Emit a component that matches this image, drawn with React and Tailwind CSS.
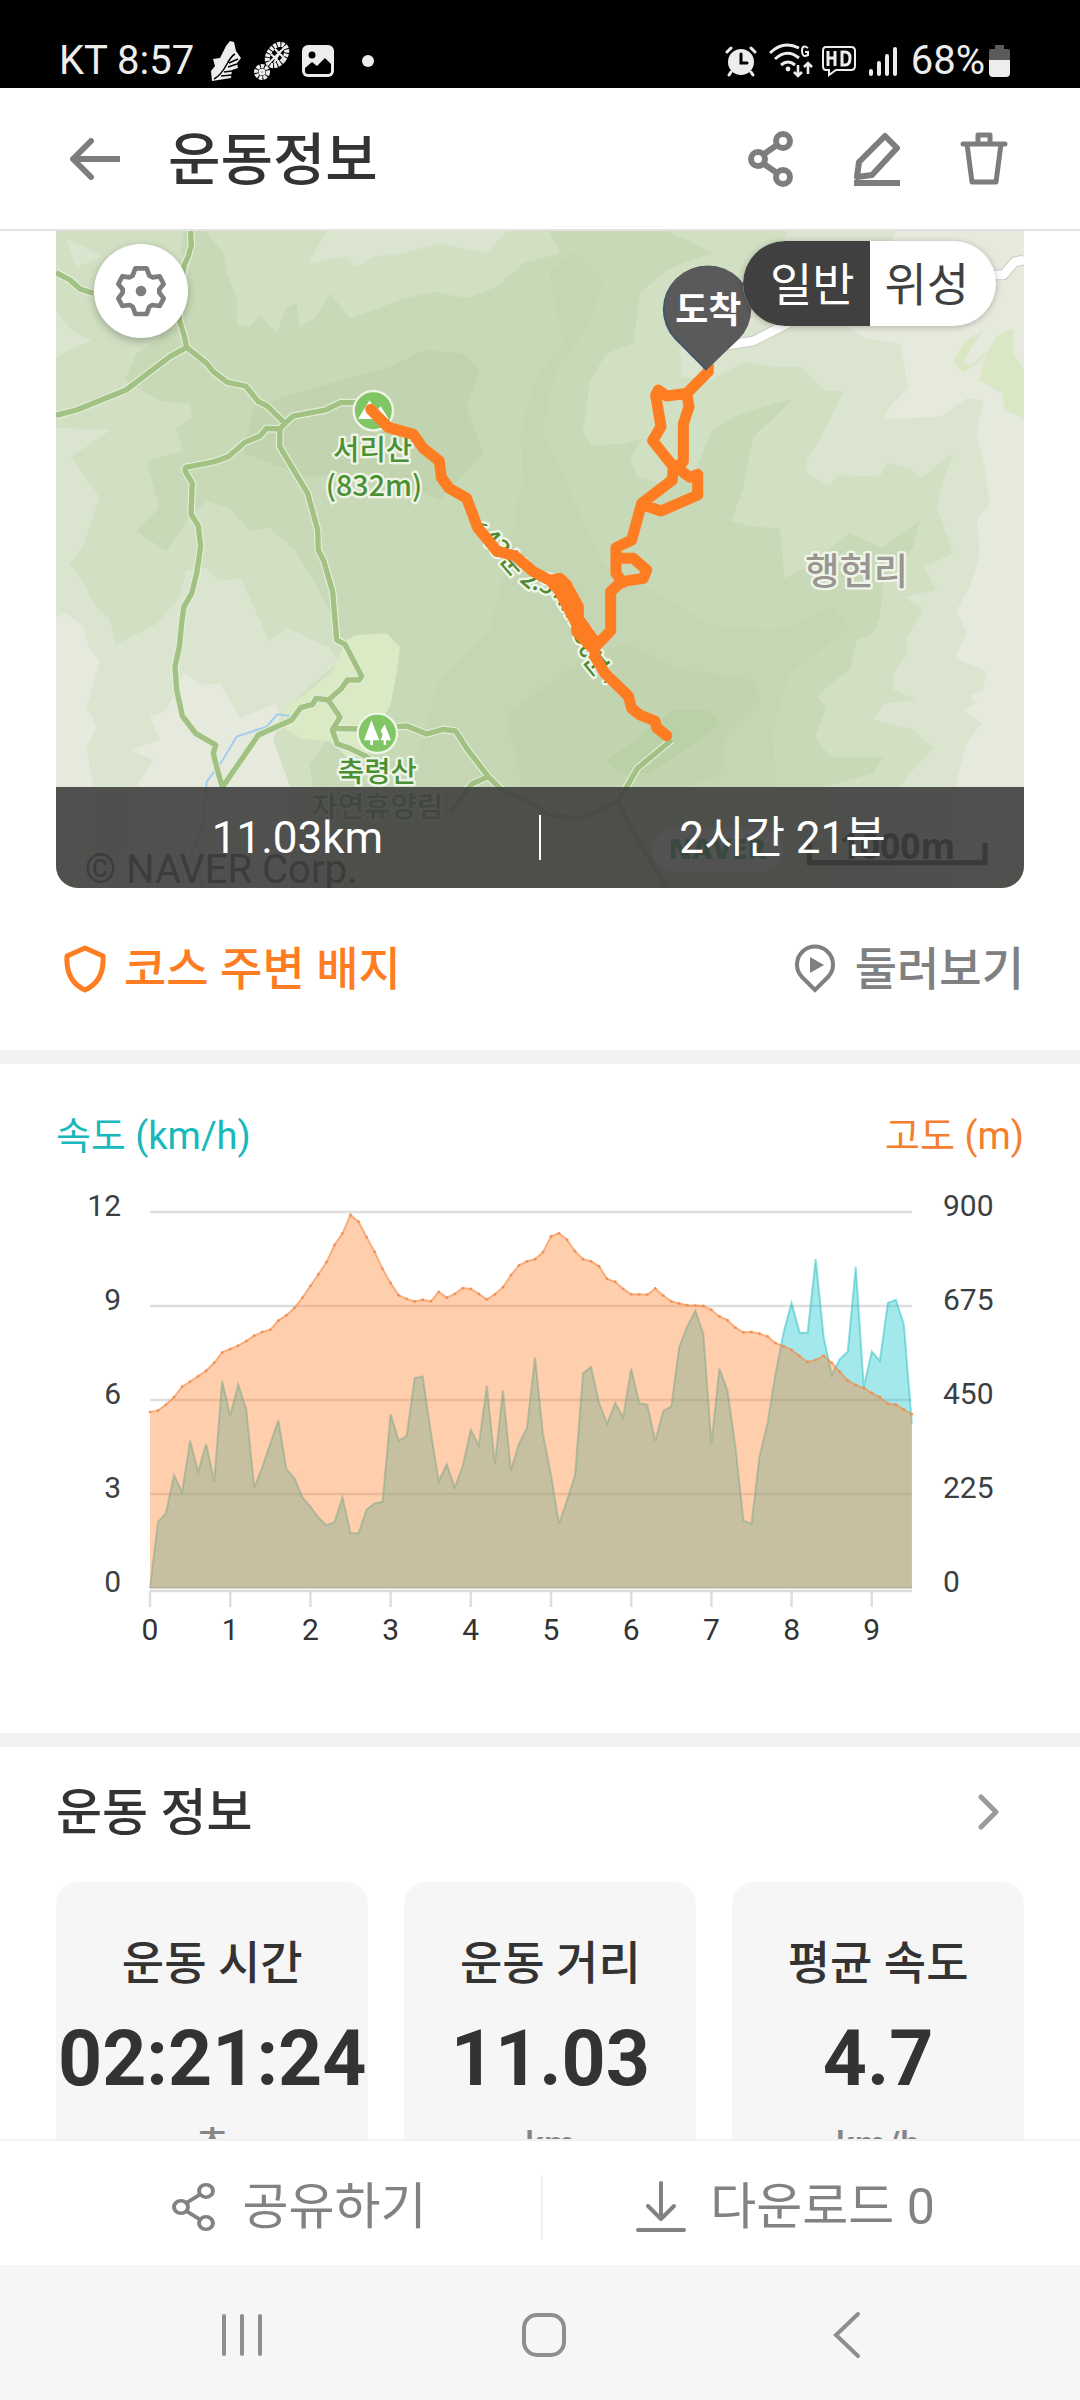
// src/pages/WorkoutDetailPage.jsx
import { useState } from 'react';

const ALTITUDE = [
  421, 425, 439, 457, 482, 494, 507, 520, 539, 564, 572, 580, 591, 604, 613, 618, 640, 653, 670, 695,
  723, 751, 780, 821, 849, 893, 877, 840, 805, 764, 730, 701, 692, 686, 690, 686, 709, 695, 704, 718,
  716, 704, 691, 703, 720, 749, 772, 782, 787, 804, 842, 849, 834, 806, 787, 782, 770, 740, 733, 716,
  703, 703, 702, 717, 700, 686, 681, 677, 676, 675, 666, 650, 641, 623, 612, 613, 609, 602, 586, 579,
  570, 555, 541, 546, 556, 539, 518, 497, 486, 479, 467, 457, 441, 439, 427, 416,
];

const SPEED = [
  0, 2.1, 2.4, 3.6, 3.05, 4.7, 3.7, 4.6, 3.4, 6.6, 5.5, 6.5, 5.7, 3.2, 3.85, 4.6, 5.35, 3.8, 3.5, 2.9,
  2.6, 2.25, 2, 2.1, 2.9, 1.75, 1.75, 2.5, 2.7, 2.75, 5.55, 4.7, 4.85, 6.7, 6.75, 5, 3.4, 3.95, 3.2, 3.9,
  5.05, 4.55, 6.45, 3.95, 6.3, 3.75, 4.6, 5.1, 7.35, 4.9, 3.6, 2.05, 2.8, 3.6, 6.85, 7.05, 5.9, 5.25, 5.9, 5.45,
  7, 5.9, 5.85, 4.7, 5.65, 5.8, 7.7, 8.35, 8.85, 8.1, 4.6, 7, 6.3, 4.5, 2.15, 2.05, 4.2, 5.25, 6.85, 8.15,
  9.1, 8.15, 8.15, 10.5, 8, 6.8, 7.3, 7.55, 10.25, 6.4, 7.55, 7.25, 9.1, 9.2, 8.4, 5.25,
];

const STATS = [
  { label: '운동 시간', value: '02:21:24', unit: '초' },
  { label: '운동 거리', value: '11.03', unit: 'km' },
  { label: '평균 속도', value: '4.7', unit: 'km/h' },
];

function ShareIcon({ className, strokeWidth = 6 }) {
  return (
    <svg className={className} viewBox="0 0 46 56" preserveAspectRatio="none" fill="none" stroke="currentColor" strokeWidth={strokeWidth}>
      <circle cx="10" cy="28" r="7" />
      <circle cx="35" cy="10" r="7" />
      <circle cx="35" cy="46" r="7" />
      <path d="M16 23 L29 14 M16 33 L29 42" />
    </svg>
  );
}

function StatusBar() {
  return (
    <div className="flex h-[88px] shrink-0 items-end justify-between bg-black pr-[70px] pb-1 pl-[59px] text-[40px] leading-[46px] text-[#ededed]">
      <div className="flex items-center">
        <span>KT 8:57</span>
        {/* boot */}
        <svg className="ml-4 h-10 w-8" viewBox="0 0 32 40">
          <path d="M16 5 L20 0 L24 1 L26 10 L31 17 L27 22 L28 27 L22 29 L21 37 L2 40 L1 30 L5 25 L3 18 L10 17 Z" fill="currentColor" />
          <path d="M25 13 C17 17 16 32 4 38 M28 18 L19 22 M27 23 L18 26 M22 30 L14 31 M22 34 L11 35" fill="none" stroke="#000" strokeWidth="1.5" />
        </svg>
        {/* sole print */}
        <svg className="ml-3 h-10 w-9" viewBox="0 0 36 40" fill="none" stroke="currentColor">
          <ellipse cx="23" cy="14" rx="8" ry="12" transform="rotate(38 23 14)" strokeWidth="5" strokeDasharray="3 1" />
          <path d="M16 21 L31 6 M17 13 L25 21 M21 8 L30 17 M25 13 L20 22" strokeWidth="2" />
          <circle cx="8" cy="31" r="6" strokeWidth="4" strokeDasharray="3.4 1" />
          <circle cx="8" cy="31" r="2" strokeWidth="3" />
        </svg>
        {/* gallery */}
        <svg className="ml-3 h-8 w-8" viewBox="0 0 32 32">
          <rect width="32" height="32" rx="6" fill="currentColor" />
          <circle cx="10" cy="10" r="3.5" fill="#000" />
          <path d="M3 23 L10 17 L15 21 L23 13 L29 19 V26 Q29 29 26 29 H6 Q3 29 3 26 Z" fill="#000" />
        </svg>
        <span className="ml-7 size-3 rounded-full bg-[#ededed]" />
      </div>
      <div className="flex items-center">
        {/* alarm */}
        <svg className="h-8 w-8" viewBox="0 0 32 32" fill="none" stroke="currentColor" strokeWidth="3" strokeLinecap="round">
          <circle cx="16" cy="17" r="13" fill="currentColor" stroke="none" />
          <path d="M2 7 L6 3 M30 7 L26 3 M6 27 L4 30 M26 27 L28 30" />
          <path d="M16 9 V18 H22" stroke="#000" />
        </svg>
        {/* wifi */}
        <svg className="ml-3 h-9 w-11" viewBox="0 0 44 36" fill="none" stroke="currentColor" strokeWidth="3">
          <path d="M1 10 Q14 -3 30 5 M6 16 Q18 5 30 15 M12 22 Q19 16 26 22" />
          <circle cx="19" cy="26" r="2.4" fill="currentColor" stroke="none" />
          <path d="M39 5 Q33 1 33 8 Q33 15 39 12 V9 H36" strokeWidth="2" />
          <path d="M29 22 V33 M25 29 L29 33 L33 29 M39 31 V20 M35 24 L39 20 L43 24" strokeWidth="2.6" />
        </svg>
        {/* HD call */}
        <svg className="ml-2 h-8 w-9" viewBox="0 0 36 32" fill="none" stroke="currentColor">
          <path d="M5 2 H30 Q34 2 34 6 V21 Q34 25 30 25 H15 L8 30 V25 H5 Q2 25 2 21 V6 Q2 2 5 2 Z" strokeWidth="2" />
          <path d="M7 6 V21 M14 6 V21 M7 13 H14 M21 7 V20 H24 Q29 20 29 13 Q29 7 24 7 Z" strokeWidth="3" />
        </svg>
        {/* signal */}
        <svg className="ml-3 h-8 w-7" viewBox="0 0 28 32" stroke="currentColor" strokeWidth="4" strokeLinecap="round">
          <path d="M2 26 V29 M10 18 V29 M18 11 V29 M26 4 V29" />
        </svg>
        <span className="ml-[14px]">68%</span>
        {/* battery */}
        <svg className="ml-1 h-8 w-[21px]" viewBox="0 0 21 32">
          <path d="M6 0 H15 V4 H19 Q21 4 21 7 V15 H0 V7 Q0 4 2 4 H6 Z" fill="#5a5a5a" />
          <path d="M0 15 H21 V28 Q21 32 17 32 H4 Q0 32 0 28 Z" fill="currentColor" />
        </svg>
      </div>
    </div>
  );
}

function Header() {
  return (
    <header className="flex h-[143px] shrink-0 items-center border-b-2 border-[#e2e2e2] pr-[72px] pl-[70px] text-[#7d7d7d]">
      <button type="button" aria-label="뒤로">
        <svg className="h-[42px] w-[50px]" viewBox="0 0 50 42" fill="none" stroke="currentColor" strokeWidth="6" strokeLinejoin="round">
          <path d="M50 21 H4" />
          <path d="M21 3 L3 21 L21 39" strokeLinecap="round" />
        </svg>
      </button>
      <h1 className="ml-12 pt-1 text-[57px] leading-[80px] font-medium text-[#333]">운동정보</h1>
      <div className="ml-auto flex items-center gap-[60px]">
        <button type="button" aria-label="공유">
          <ShareIcon className="h-14 w-[46px]" />
        </button>
        <button type="button" aria-label="편집">
          <svg className="h-14 w-[46px]" viewBox="0 0 46 56" fill="none" stroke="currentColor" strokeWidth="6">
            <path d="M31 5 L43 17 L18 44 L3 46 L5 31 Z" strokeLinejoin="round" />
            <path d="M0 52 H46" />
          </svg>
        </button>
        <button type="button" aria-label="삭제">
          <svg className="h-14 w-12" viewBox="0 0 48 56" fill="none" stroke="currentColor" strokeWidth="5" strokeLinejoin="round">
            <path d="M3 13 H45" strokeLinecap="round" />
            <path d="M18 13 V4 H30 V13 M7 13 L12 51 H36 L41 13" />
          </svg>
        </button>
      </div>
    </header>
  );
}

const TRAILS = [
  'M404 0 L406 42 L397 75 L384 105 L370 190 L370 267 L384 312 L392 349',
  'M0 125 L42 147 L72 174 L112 187',
  'M0 553 L62 537 L210 477 L342 377 L392 349 L452 397 L472 422 L514 454 L569 465 L607 512 L634 525 L687 577',
  'M687 577 L712 555 L809 537 L854 515 L900 515',
  'M687 577 L672 594 L632 592 L612 615 L565 635 L517 677 L472 693 L389 709 L387 719 L409 757 L405 849 L427 885 L434 947 L422 1027 L407 1087 L384 1127 L378 1167 L370 1247 L357 1307 L362 1377 L379 1455 L419 1507 L479 1542 L472 1567 L487 1627 L499 1669',
  'M672 594 L671 647 L755 787 L785 897 L787 957 L804 992 L830 1082 L842 1227 L867 1240 L917 1335 L909 1347 L874 1347 L857 1372 L817 1407 L780 1402 L770 1420 L734 1430 L707 1467 L607 1512 L499 1669',
  'M817 1407 L852 1459 L829 1497 L844 1539 L882 1552 L932 1577 L960 1597',
  'M832 1492 L910 1494 M1022 1487 L1052 1485 L1112 1509 L1162 1495 L1199 1500 L1232 1552 L1297 1637 L1347 1687 L1402 1702 L1482 1752 L1572 1762 L1687 1712',
  'M1297 1637 L1247 1659 L1182 1747',
  'M1847 1527 L1744 1612 L1687 1712 L1722 1787 L1832 1970',
];

const ROUTES = [
  'M944 535 L997 589 L1072 610 L1102 652 L1150 690 L1156 740 L1180 772 L1232 802 L1265 890 L1297 928 L1322 960 L1377 975 L1432 1022 L1482 1048 L1512 1042 L1532 1062 L1567 1127 L1567 1162 L1617 1232 L1617 1277 L1647 1327 L1717 1395 L1727 1432 L1752 1452 L1797 1470 L1802 1490 L1832 1514',
  'M1482 1048 L1510 1080 L1562 1180 L1562 1202 L1612 1254 L1664 1199 L1664 1082 L1697 1052 L1762 1042 L1772 1017 L1732 982 L1680 982',
  'M1700 1055 L1680 1027 L1680 950 L1727 927 L1757 817 L1849 747 L1852 707 L1790 629 L1815 587 L1799 492 L1807 477 L1832 495 L1892 487 L1957 422 L1957 404',
  'M1892 487 L1899 527 L1882 579 L1882 692 L1860 708 L1902 739 L1925 730 L1925 792 L1815 840 L1762 822',
];

// Drawn on a 2904 x 1971 canvas (three units per map pixel)
function TrailMap() {
  const label = { paintOrder: 'stroke', strokeLinejoin: 'round' };
  return (
    <svg className="block w-full" viewBox="0 0 2904 1971" role="img" aria-label="서리산 축령산 운동 경로 지도">
      {/* Terrain */}
      <rect width="2904" height="1971" fill="#c7d9b6" />
      <path fill="#d1dfc2" d="M0 0 H384 L372 60 L400 100 L390 230 L300 330 L240 370 L207 447 L310 510 L402 520 L410 560 L360 590 L380 660 L272 690 L310 830 L240 900 L330 960 L400 860 L450 810 L520 830 L580 900 L640 890 L720 960 L790 1080 L850 1200 L880 1300 L900 1400 L760 1600 L820 1971 H0 Z" />
      <path fill="#d1dfc2" d="M450 0 L462 17 L502 67 L512 127 L542 197 L542 282 L582 287 L612 252 L662 307 L692 227 L722 217 L732 287 L782 257 L822 187 L882 262 L952 237 L1032 207 L1132 182 L1232 202 L1322 167 L1402 97 L1512 67 L1480 0 Z" />
      <path fill="#dbe4cf" d="M812 0 L757 97 L872 77 L902 107 L952 77 L1042 67 L1152 37 L1292 67 L1352 0 Z M30 20 L140 75 L60 110 Z" />
      <path fill="#c4d6b3" d="M1400 740 L1395 600 L1440 440 L1520 340 L1480 120 L1560 60 L1640 150 L1600 280 L1500 420 L1460 600 L1560 820 L1640 1000 L1760 1060 L1960 1180 L2160 1200 L2330 1130 L2380 1190 L2200 1330 L2150 1500 L2160 1668 H1050 L1150 1350 L1300 1200 L1350 1000 Z" />
      <path fill="#c2d4af" d="M562 667 L592 527 L752 477 L1002 407 L1102 357 L1222 367 L1272 417 L1232 527 L1282 667 L1152 807 L952 727 L752 737 Z" />
      <path fill="#c2d4af" d="M1350 1450 L1560 1300 L1702 1237 L1850 1310 L2092 1347 L2112 1407 L2012 1507 L1992 1627 L1900 1668 H1400 Z" />
      <path fill="#bad0a6" d="M1652 1587 L1712 1547 L1852 1437 L1952 1437 L1997 1477 L1902 1547 L1782 1627 L1692 1627 Z" />
      <path fill="#d1dfc2" d="M1832 0 L1892 27 L1967 67 L1880 97 L1832 117 L1752 187 L1732 337 L1652 367 L1602 447 L1580 607 L1607 642 L1702 640 L1762 620 L1722 680 L1742 737 L1830 760 L1920 720 L1965 600 L2050 550 L2215 500 L2090 620 L2060 780 L2025 870 L2092 887 L2172 892 L2185 1042 L2250 1010 L2380 907 L2480 950 L2590 870 L2570 950 L2480 1060 L2472 1157 L2452 1207 L2402 1227 L2382 1317 L2312 1367 L2282 1397 L2312 1427 L2277 1517 L2322 1577 L2482 1577 L2452 1627 L2302 1668 V1971 H2904 V0 Z" />
      <path fill="#dbe4cf" d="M2192 0 L2172 80 L1872 297 L1877 437 L1962 447 L2072 392 L2152 407 L2232 407 L2302 477 L2362 482 L2312 587 L2252 687 L2252 727 L2322 767 L2342 732 L2472 737 L2492 697 L2562 712 L2592 742 L2692 667 L2662 747 L2642 827 L2692 967 L2602 1007 L2642 1077 L2542 1097 L2602 1137 L2552 1217 L2552 1267 L2512 1327 L2512 1377 L2582 1407 L2482 1417 L2452 1467 L2572 1497 L2632 1552 L2562 1627 L2532 1668 V1971 H2904 V0 Z" />
      <path fill="#e6eadd" d="M2522 0 L2372 287 L2432 322 L2532 337 L2557 472 L2502 527 L2482 565 L2652 557 L2732 502 L2782 507 L2762 607 L2782 687 L2802 817 L2762 867 L2772 967 L2742 1067 L2702 1137 L2732 1207 L2697 1282 L2792 1322 L2782 1377 L2742 1392 L2762 1417 L2722 1437 L2777 1477 L2732 1537 L2702 1647 V1971 H2904 V0 Z" />
      <path fill="#dbe4cf" d="M0 240 L50 300 L110 330 L30 360 L0 380 Z M0 590 L165 597 L45 677 L130 797 L80 950 L40 1000 L80 1050 L120 1130 L160 1160 L180 1240 L300 1180 L370 1100 L390 1020 L450 1010 L490 1050 L555 1040 L590 1120 L640 1230 L690 1190 L820 1250 L850 1290 L690 1430 L650 1530 L700 1660 V1971 H0 Z" />
      <path fill="#e6eadd" d="M0 1157 L32 1147 L82 1187 L102 1257 L132 1287 L92 1427 L122 1487 L92 1547 L112 1668 V1971 H0 Z M382 1327 L442 1362 L492 1357 L552 1462 L662 1417 L672 1450 L652 1527 L702 1668 V1971 H200 L242 1668 L292 1587 L222 1557 L312 1527 L282 1457 L332 1437 Z" />
      <path fill="#d9eac5" d="M902 1212 L992 1207 L1032 1247 L1022 1327 L1002 1427 L952 1507 L932 1577 L872 1577 L822 1532 L732 1522 L692 1497 L672 1437 L752 1387 L832 1317 L872 1227 Z" />
      <path fill="#d9e7c4" d="M2822 317 L2872 292 V367 L2904 417 V562 L2847 537 L2837 487 L2767 447 L2792 367 Z M2692 390 L2722 335 L2782 297 L2745 350 L2722 395 L2750 400 L2790 360 L2780 385 L2722 425 Z" />

      {/* Stream and road */}
      <path fill="none" stroke="#a3cdf0" strokeWidth="6" d="M702 1455 L664 1450 L632 1487 L542 1517 L497 1592 L452 1652 L442 1787 L407 1867 L442 1970" />
      <g fill="none" strokeLinejoin="round">
        <path stroke="#c9ccc6" strokeWidth="32" d="M2000 345 L2092 330 L2200 275 M2800 132 L2842 132 L2877 92 L2904 87" />
        <path stroke="#fff" strokeWidth="26" d="M2000 345 L2092 330 L2200 275 M2800 132 L2842 132 L2877 92 L2904 87" />
        <path stroke="#dfe2d8" strokeWidth="20" d="M2780 1971 V1840 L2870 1770 L2904 1730" />
      </g>

      <g fill="none" strokeLinejoin="round">
        <path stroke="#e4edd9" strokeWidth="23" d={TRAILS.join(' ')} />
        <path stroke="#a1c282" strokeWidth="16" d={TRAILS.join(' ')} />
      </g>

      {/* Map labels */}
      <g fontFamily="'Noto Sans CJK KR', sans-serif" fontSize="86" fontWeight="500" textAnchor="middle" fill="#4b9134" stroke="#f0f5ea" strokeWidth="14" style={label}>
        <text x="950" y="688">서리산</text>
        <text x="954" y="794">(832m)</text>
        <text x="964" y="1654">축령산</text>
        <text x="964" y="1758">자연휴양림</text>
        <text x="2402" y="1062" fontSize="112" fill="#999590">행현리</text>
      </g>
      <path id="trail-label" fill="none" d="M1235 850 L1280 935 L1330 990 L1367 1032 L1407 1066 L1440 1078 L1490 1092 L1535 1165 L1560 1230 L1580 1290 L1602 1317 L1637 1357 L1712 1417" />
      <text fontFamily="'Noto Sans CJK KR', sans-serif" fontSize="76" fontWeight="500" fill="#4f8a30" stroke="#f0f5ea" strokeWidth="14" style={label}>
        <textPath href="#trail-label" startOffset="40">‹ 43분 2.5km 50분 ›</textPath>
      </text>

      <circle cx="952" cy="539" r="59" fill="#80c664" stroke="#eff5e8" strokeWidth="7" />
      <path d="M906 564 L941 508 L960 540 L974 526 L998 564 Z" fill="#fff" />
      <circle cx="964" cy="1507" r="59" fill="#80c664" stroke="#eff5e8" strokeWidth="7" />
      <path d="M946 1468 L970 1528 H951 V1542 H943 V1528 H924 Z M986 1480 L1005 1528 H990 V1542 H983 V1528 H974 L980 1510 L974 1500 Z" fill="#fff" />

      <path fill="none" stroke="#ff7d22" strokeWidth="33" strokeLinecap="round" strokeLinejoin="round" d={ROUTES.join(' ')} />

      {/* Finish pin */}
      <path fill="#41566b" d="M1950 419 L1856 325 A130 130 0 1 1 2045 325 Z" />
      <path fill="#5a5a5a" d="M1953 414 L1864 325 A130 130 0 1 1 2048 325 Z" />
      <text x="1957" y="275" textAnchor="middle" fontFamily="'Noto Sans CJK KR', sans-serif" fontSize="108" fontWeight="700" fill="#fff">도착</text>

      {/* Attribution and scale */}
      <text x="86" y="1955" fontFamily="Roboto, sans-serif" fontSize="120" fill="#222">© NAVER Corp.</text>
      <rect x="1788" y="1792" width="394" height="130" rx="65" fill="#fff" />
      <text x="1838" y="1885" fontFamily="'Open Sans', sans-serif" fontSize="84" fontWeight="800" fill="#03a74a">NAVER</text>
      <text x="2524" y="1884" textAnchor="middle" fontFamily="'Open Sans', sans-serif" fontSize="106" fontWeight="700" fill="#000">1000m</text>
      <path d="M2260 1836 V1895 H2787 V1836" fill="none" stroke="#000" strokeWidth="15" />
    </svg>
  );
}

function MapSection() {
  const [mapType, setMapType] = useState('normal');

  return (
    <section className="relative mx-14 overflow-hidden rounded-b-[22px]">
      <TrailMap />
      <button
        type="button"
        aria-label="지도 설정"
        className="absolute top-[13px] left-[38px] flex size-[94px] items-center justify-center rounded-full bg-white text-[#7d7d7d] shadow-[0_3px_8px_rgba(0,0,0,0.25)]"
      >
        <svg className="size-[52px]" viewBox="224 136 156 156" fill="none" stroke="currentColor" strokeWidth="14" strokeLinejoin="round">
          <path d="M285 146 H319 L327 168 L336 173 L358 170 L370 193 L357 209 V219 L370 236 L358 259 L336 256 L327 261 L319 283 H285 L277 261 L268 256 L246 259 L234 236 L247 219 V209 L234 193 L246 170 L268 173 L277 168 Z" />
          <circle cx="302" cy="214" r="16" fill="currentColor" stroke="none" />
        </svg>
      </button>
      <div className="absolute top-[10px] right-7 flex h-[85px] w-[253px] overflow-hidden rounded-full bg-white text-[46px] leading-[88px] shadow-[0_1px_6px_rgba(0,0,0,0.25)]">
        <button
          type="button"
          aria-pressed={mapType === 'normal'}
          onClick={() => setMapType('normal')}
          className={mapType === 'normal' ? 'w-1/2 bg-[#404040] pl-3 text-white' : 'w-1/2 pl-3 text-[#404040]'}
        >
          일반
        </button>
        <button
          type="button"
          aria-pressed={mapType === 'satellite'}
          onClick={() => setMapType('satellite')}
          className={mapType === 'satellite' ? 'w-1/2 bg-[#404040] pr-3 text-white' : 'w-1/2 pr-3 text-[#404040]'}
        >
          위성
        </button>
      </div>
      <div className="absolute inset-x-0 bottom-0 flex h-[101px] items-center bg-[#3f3f3f]/90 text-center text-[44px] leading-[60px] text-white">
        <span className="flex-1">11.03km</span>
        <span className="h-[45px] w-[2px] bg-white" />
        <span className="flex-1">2시간 21분</span>
      </div>
    </section>
  );
}

const CHART = { left: 94, bottom: 418, step: 8.02, height: 376 };

function toPoints(values, max) {
  return values.map((v, i) => [CHART.left + i * CHART.step, CHART.bottom - (v / max) * CHART.height]);
}

function SpeedAltitudeChart() {
  const speed = toPoints(SPEED, 12);
  const altitude = toPoints(ALTITUDE, 900);
  const right = CHART.left + 95 * CHART.step;
  const line = (points) => 'M' + points.map((p) => p.join(' ')).join(' L');
  const area = (points) => `${line(points)} L${right} ${CHART.bottom} L${CHART.left} ${CHART.bottom} Z`;

  return (
    <svg className="block w-full" viewBox="0 0 968 480" role="img" aria-label="속도 고도 그래프">
      {[0, 1, 2, 3, 4].map((i) => {
        const y = CHART.bottom - (CHART.height / 4) * i;
        return (
          <g key={i} fontSize="30" fill="#3a3f44">
            <path d={`M${CHART.left} ${y} H${right}`} stroke="#dedede" strokeWidth="2.5" />
            <text x="65" y={y + 4} textAnchor="end">{i * 3}</text>
            <text x="887" y={y + 4}>{i * 225}</text>
          </g>
        );
      })}
      <path d={area(speed)} fill="#19c8cd" fillOpacity="0.4" />
      <path d={line(speed)} fill="none" stroke="#19b9be" strokeOpacity="0.45" strokeWidth="2" />
      <path d={area(altitude)} fill="#ff822d" fillOpacity="0.39" />
      <path d={line(altitude)} fill="none" stroke="#f58a45" strokeOpacity="0.6" strokeWidth="2" />
      {altitude.map(([x, y]) => (
        <circle key={x} cx={x} cy={y} r="1.4" fill="#f0884a" fillOpacity="0.8" />
      ))}
      <path d={`M${CHART.left} 421 H${right}`} stroke="#dedede" strokeWidth="2.5" />
      {[0, 1, 2, 3, 4, 5, 6, 7, 8, 9].map((km) => {
        const x = CHART.left + km * CHART.step * 10;
        return (
          <g key={km}>
            <path d={`M${x} 421 V437`} stroke="#dedede" strokeWidth="2.5" />
            <text x={x} y="470" textAnchor="middle" fontSize="30" fill="#333">{km}</text>
          </g>
        );
      })}
    </svg>
  );
}

function StatCard({ label, value, unit }) {
  return (
    <div className="flex flex-1 flex-col items-center rounded-[22px] bg-[#f6f6f6] px-[2px] pt-[53px] pb-12">
      <dt className="text-[46px] leading-[56px] font-medium whitespace-nowrap text-[#333]">{label}</dt>
      <dd className="mt-7 flex flex-col items-center">
        <span className="text-[77px] leading-[80px] font-bold text-[#333]">{value}</span>
        <span className="mt-6 text-[36px] leading-[44px] font-medium text-[#858585]">{unit}</span>
      </dd>
    </div>
  );
}

function BottomActions() {
  return (
    <div className="flex h-[126px] shrink-0 items-center border-t-2 border-[#f2f2f2] bg-white pt-2 pr-[52px] pl-14 text-[50px] leading-[64px] text-[#828282]">
      <button type="button" className="flex flex-1 items-center justify-center gap-[26px]">
        <ShareIcon className="h-[50px] w-[46px]" strokeWidth={4} />
        공유하기
      </button>
      <span className="h-[65px] w-[2px] bg-[#f0f0f0]" />
      <button type="button" className="flex flex-1 items-center justify-center gap-6">
        <svg className="h-[52px] w-[50px]" viewBox="0 0 50 52" fill="none" stroke="currentColor" strokeWidth="4" strokeLinecap="round" strokeLinejoin="round">
          <path d="M25 2 V38 M12 25 L25 38 L38 25 M2 49 H48" />
        </svg>
        다운로드 0
      </button>
    </div>
  );
}

function SystemNav() {
  return (
    <nav className="grid h-[135px] shrink-0 grid-cols-3 items-center justify-items-center bg-[#f6f6f6] pt-1 pr-[83px] pl-[91px] text-[#8e8e8e]">
      <button type="button" aria-label="최근 앱">
        <svg className="h-12 w-12" viewBox="0 0 48 48" stroke="currentColor" strokeWidth="4" strokeLinecap="round">
          <path d="M6 5 V43 M24 5 V43 M42 5 V43" />
        </svg>
      </button>
      <button type="button" aria-label="홈">
        <svg className="h-12 w-12" viewBox="0 0 48 48" fill="none" stroke="currentColor" strokeWidth="4">
          <rect x="4" y="4" width="40" height="40" rx="13" />
        </svg>
      </button>
      <button type="button" aria-label="뒤로 가기">
        <svg className="h-12 w-12" viewBox="0 0 48 48" fill="none" stroke="currentColor" strokeWidth="4" strokeLinecap="round">
          <path d="M36 3 L14 24 L36 45" />
        </svg>
      </button>
    </nav>
  );
}

function App() {
  return (
    <div className="flex h-screen flex-col bg-white font-[Roboto,'Noto_Sans_CJK_KR',sans-serif]">
      <StatusBar />
      <Header />

      <main className="min-h-0 flex-1 overflow-y-auto [scrollbar-width:none]">
        <MapSection />

        <div className="flex h-[162px] items-center justify-between px-14 text-[46px] leading-[60px] font-medium">
          <button type="button" className="flex items-center gap-[18px] pl-2 text-[#ff7d22]">
            <svg className="h-12 w-[42px]" viewBox="0 0 42 48" fill="none" stroke="currentColor" strokeWidth="5" strokeLinejoin="round">
              <path d="M21 3 L39 11 C40 27 34 39 21 45 C8 39 2 27 3 11 Z" />
            </svg>
            코스 주변 배지
          </button>
          <button type="button" className="flex items-center gap-5 text-[#808080]">
            <svg className="h-[50px] w-10" viewBox="0 0 40 50" fill="none" stroke="currentColor" strokeWidth="4">
              <path d="M20 46 L7 33 A18 18 0 1 1 33 33 Z" />
              <path d="M15 13 L29 21 L15 29 Z" fill="currentColor" stroke="none" />
            </svg>
            둘러보기
          </button>
        </div>

        {/* Speed / altitude graph */}
        <section className="border-t-[14px] border-[#f1f2f4] pt-12 pb-[83px]">
          <div className="mx-14 flex justify-between text-[38px] leading-[48px]">
            <span className="text-[#18b8bd]">속도 (km/h)</span>
            <span className="text-[#f57f2f]">고도 (m)</span>
          </div>
          <div className="mx-14 mt-[10px]">
            <SpeedAltitudeChart />
          </div>
        </section>

        {/* Workout summary */}
        <section className="border-t-[14px] border-[#f1f2f4] px-14 pt-8">
          <div className="flex items-center justify-between">
            <h2 className="pt-[2px] text-[50px] leading-[64px] font-medium text-[#333]">운동 정보</h2>
            <button type="button" aria-label="더보기" className="mr-6 text-[#9a9a9a]">
              <svg className="h-9 w-[22px]" viewBox="0 0 22 36" fill="none" stroke="currentColor" strokeWidth="5" strokeLinecap="round" strokeLinejoin="round">
                <path d="M3 3 L18 18 L3 33" />
              </svg>
            </button>
          </div>
          <dl className="mt-[37px] flex gap-9">
            {STATS.map((stat) => (
              <StatCard key={stat.label} {...stat} />
            ))}
          </dl>
        </section>
      </main>

      <BottomActions />
      <SystemNav />
    </div>
  );
}

export default App;
